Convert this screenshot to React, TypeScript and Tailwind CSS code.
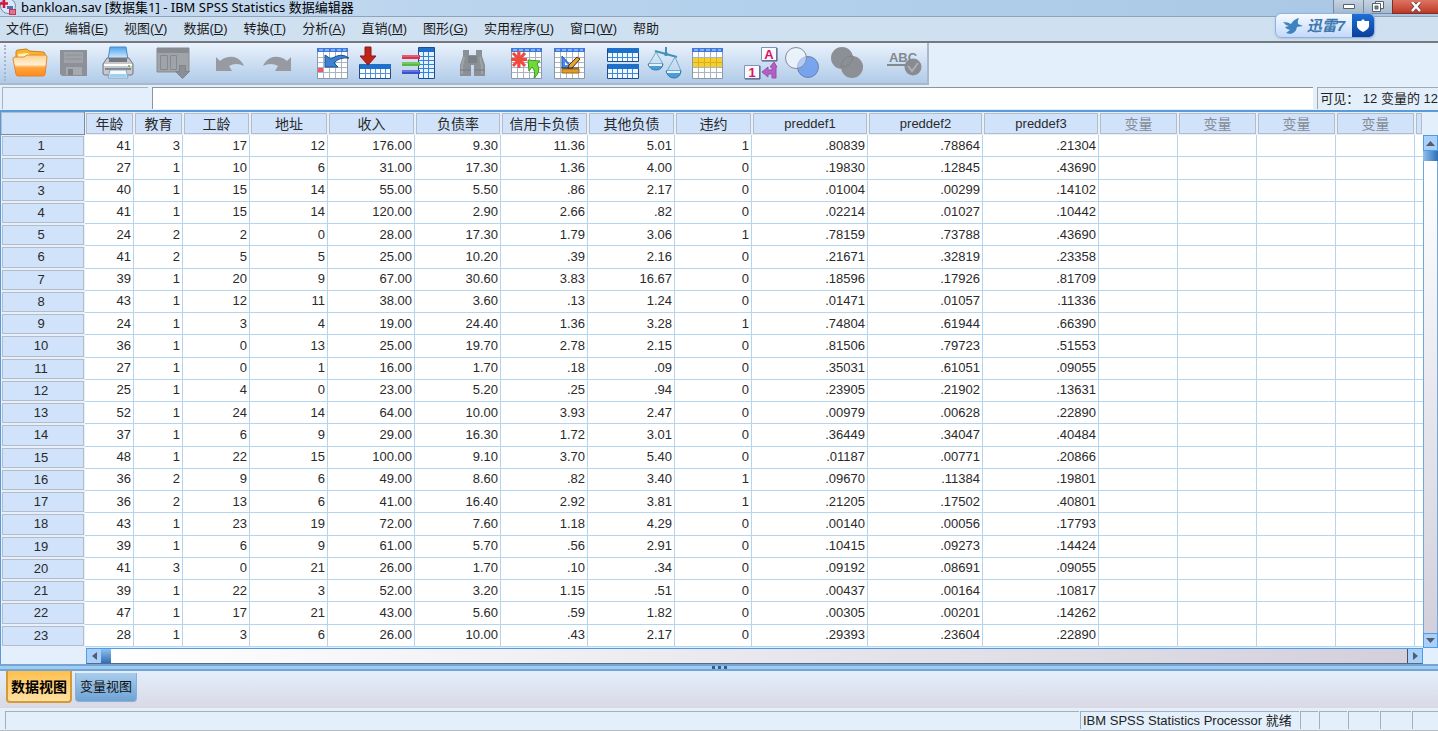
import React from 'react';

interface Column {
  name: string;
  width: string;
  decimals?: number;
}

const columns: Column[] = [
  { name: '年龄', width: 'w-[49px]' },
  { name: '教育', width: 'w-[49px]' },
  { name: '工龄', width: 'w-[67px]' },
  { name: '地址', width: 'w-[78px]' },
  { name: '收入', width: 'w-[87px]', decimals: 2 },
  { name: '负债率', width: 'w-[86px]', decimals: 2 },
  { name: '信用卡负债', width: 'w-[87px]', decimals: 2 },
  { name: '其他负债', width: 'w-[87px]', decimals: 2 },
  { name: '违约', width: 'w-[77px]' },
  { name: 'preddef1', width: 'w-[116px]', decimals: 5 },
  { name: 'preddef2', width: 'w-[115px]', decimals: 5 },
  { name: 'preddef3', width: 'w-[116px]', decimals: 5 }
];

const emptyColumns = [1, 2, 3, 4];

const rows: number[][] = [
  [41, 3, 17, 12, 176, 9.3, 11.36, 5.01, 1, 0.80839, 0.78864, 0.21304],
  [27, 1, 10, 6, 31, 17.3, 1.36, 4, 0, 0.1983, 0.12845, 0.4369],
  [40, 1, 15, 14, 55, 5.5, 0.86, 2.17, 0, 0.01004, 0.00299, 0.14102],
  [41, 1, 15, 14, 120, 2.9, 2.66, 0.82, 0, 0.02214, 0.01027, 0.10442],
  [24, 2, 2, 0, 28, 17.3, 1.79, 3.06, 1, 0.78159, 0.73788, 0.4369],
  [41, 2, 5, 5, 25, 10.2, 0.39, 2.16, 0, 0.21671, 0.32819, 0.23358],
  [39, 1, 20, 9, 67, 30.6, 3.83, 16.67, 0, 0.18596, 0.17926, 0.81709],
  [43, 1, 12, 11, 38, 3.6, 0.13, 1.24, 0, 0.01471, 0.01057, 0.11336],
  [24, 1, 3, 4, 19, 24.4, 1.36, 3.28, 1, 0.74804, 0.61944, 0.6639],
  [36, 1, 0, 13, 25, 19.7, 2.78, 2.15, 0, 0.81506, 0.79723, 0.51553],
  [27, 1, 0, 1, 16, 1.7, 0.18, 0.09, 0, 0.35031, 0.61051, 0.09055],
  [25, 1, 4, 0, 23, 5.2, 0.25, 0.94, 0, 0.23905, 0.21902, 0.13631],
  [52, 1, 24, 14, 64, 10, 3.93, 2.47, 0, 0.00979, 0.00628, 0.2289],
  [37, 1, 6, 9, 29, 16.3, 1.72, 3.01, 0, 0.36449, 0.34047, 0.40484],
  [48, 1, 22, 15, 100, 9.1, 3.7, 5.4, 0, 0.01187, 0.00771, 0.20866],
  [36, 2, 9, 6, 49, 8.6, 0.82, 3.4, 1, 0.0967, 0.11384, 0.19801],
  [36, 2, 13, 6, 41, 16.4, 2.92, 3.81, 1, 0.21205, 0.17502, 0.40801],
  [43, 1, 23, 19, 72, 7.6, 1.18, 4.29, 0, 0.0014, 0.00056, 0.17793],
  [39, 1, 6, 9, 61, 5.7, 0.56, 2.91, 0, 0.10415, 0.09273, 0.14424],
  [41, 3, 0, 21, 26, 1.7, 0.1, 0.34, 0, 0.09192, 0.08691, 0.09055],
  [39, 1, 22, 3, 52, 3.2, 1.15, 0.51, 0, 0.00437, 0.00164, 0.10817],
  [47, 1, 17, 21, 43, 5.6, 0.59, 1.82, 0, 0.00305, 0.00201, 0.14262],
  [28, 1, 3, 6, 26, 10, 0.43, 2.17, 0, 0.29393, 0.23604, 0.2289]
];

const menus: [string, string][] = [
  ['文件', 'F'],
  ['编辑', 'E'],
  ['视图', 'V'],
  ['数据', 'D'],
  ['转换', 'T'],
  ['分析', 'A'],
  ['直销', 'M'],
  ['图形', 'G'],
  ['实用程序', 'U'],
  ['窗口', 'W'],
  ['帮助', '']
];

// SPSS drops the leading zero of fractions
const formatValue = (value: number, decimals?: number) =>
  decimals ? value.toFixed(decimals).replace(/^0\./, '.') : String(value);

interface IconProps {
  children: React.ReactNode;
}

function Icon({ children }: IconProps) {
  return (
    <svg className="w-8 h-8 overflow-visible" viewBox="0 0 32 32" fill="none" aria-hidden="true">
      {children}
    </svg>
  );
}

function OpenIcon() {
  return (
    <Icon>
      <defs>
        <linearGradient id="folderFront" x1="0" y1="0" x2="0" y2="1">
          <stop offset="0" stopColor="#ffd08a" />
          <stop offset=".45" stopColor="#fff0d2" />
          <stop offset=".6" stopColor="#ffa53c" />
          <stop offset="1" stopColor="#ff8a1e" />
        </linearGradient>
      </defs>
      <path d="M2 26V5q0-2 2-2l8-1q2 0 3 2l14 1q2 0 2 2v19z" fill="#f9b52c" stroke="#c9811c" />
      <path d="M4 10V7l10-1 2 2 13 1v4H4z" fill="#fff3c4" />
      <path d="M-1 12q0-2 2-2h9l3-2h18q2 0 2 2l-2 17q0 2-2 2H4q-2 0-2-2z" fill="url(#folderFront)" stroke="#e8842a" />
    </Icon>
  );
}

function SaveIcon() {
  return (
    <Icon>
      <path d="M2 3h27v26H4l-2-2z" fill="#8d9197" />
      <path d="M6 5h19v11H6z" fill="#9fa3a9" />
      <path d="M7 8h17M7 12h17" stroke="#8b9097" />
      <path d="M8 20h16v8H8z" fill="#a5aab0" />
      <path d="M10 22h5v6h-5z" fill="#80858b" />
    </Icon>
  );
}

function PrintIcon() {
  return (
    <Icon>
      <defs>
        <linearGradient id="paper" x1="0" y1="0" x2="0" y2="1">
          <stop offset="0" stopColor="#4da4ee" />
          <stop offset="1" stopColor="#e8f6ff" />
        </linearGradient>
      </defs>
      <path d="M8 0h16l2 13H6z" fill="url(#paper)" stroke="#4a8cc8" />
      <path d="M5 11h22l4 6v9q0 2-2 2H3q-2 0-2-2v-9z" fill="#c6c8cb" stroke="#74777c" />
      <path d="M7 11h18v4H7z" fill="#75797f" />
      <path d="M2 18h28" stroke="#fff" strokeWidth="2" />
      <path d="M3 22h26" stroke="#84888e" strokeWidth="2" />
      <circle cx="27" cy="19" r="1" fill="#53b94e" />
      <path d="M8 23h16l2 8H6z" fill="#f4faff" stroke="#8aa5bd" />
      <path d="M8 27h16l1 3H7z" fill="#9ed2f4" />
    </Icon>
  );
}

function RecallIcon() {
  return (
    <Icon>
      <path d="M-1 1h32v24H-1z" fill="#a0a4a9" stroke="#898d93" />
      <path d="M-1 1h32v5H-1z" fill="#878b91" />
      <path d="M2.500 8.500h7v14h-7zM12.500 8.500h6v14h-6z" fill="#a0a4a9" stroke="#858a90" />
      <path d="M21.500 18.500h6v6h4l-7 7-7-7h4z" fill="#8b8f95" stroke="#7f8389" />
    </Icon>
  );
}

function UndoIcon() {
  return (
    <Icon>
      <path d="M2 10l4 4q6-5 14-4 7 2 10 9-8-4-15 0l3 5H2z" fill="#979ba1" />
    </Icon>
  );
}

function RedoIcon() {
  return (
    <Icon>
      <path d="M29 10l-4 4q-6-5-14-4-7 2-10 9 8-4 15 0l-3 5h16z" fill="#979ba1" />
    </Icon>
  );
}

function GridBase() {
  return (
    <>
      <path d="M1.500 1.500h30v30h-30z" fill="#fff" stroke="#8c97a8" />
      <path d="M1 1h31v4H1z" fill="#3f78dc" />
      <path d="M3 2h4v2H3zM9 2h4v2H9zM15 2h4v2h-4zM21 2h4v2h-4zM27 2h3v2h-3z" fill="#83b0f5" />
      <path d="M7.500 5v26M13.500 5v26M19.500 5v26M25.500 5v26M2 10.500h29M2 15.500h29M2 20.500h29M2 25.500h29" stroke="#aab5c4" />
    </>
  );
}

function GotoCaseIcon() {
  return (
    <Icon>
      <GridBase />
      <path d="M2 21h5v4H2z" fill="#f2566a" />
      <path d="M9 8v12h13l-4-4q5-6 15-5-8-6-18 1z" fill="#3c82d2" stroke="#1c5096" />
    </Icon>
  );
}

function GotoVariableIcon() {
  return (
    <Icon>
      <path d="M.5 17.500h31v14H.5z" fill="#fff" stroke="#1d4c8f" />
      <path d="M1 17h31v5H1z" fill="#1e70c9" />
      <path d="M1 26.500h30M6.500 22v9M11.500 22v9M16.500 22v9M21.500 22v9M26.500 22v9" stroke="#5294d8" />
      <path d="M6 0h6v9h5L9 18 1 9h5z" fill="#bf2419" stroke="#8f1710" />
    </Icon>
  );
}

function VariablesIcon() {
  return (
    <Icon>
      <path d="M16.500.500h16v31h-16z" fill="#e4f2ff" stroke="#1d4c8f" />
      <path d="M17 1h15v4H17z" fill="#1e70c9" />
      <path d="M21.500 5v26M26.500 5v26M17 9.500h15M17 13.500h15M17 17.500h15M17 21.500h15M17 25.500h15" stroke="#3483d6" />
      <path d="M0 8h18v4H0z" fill="#dc3252" />
      <path d="M0 15h18v4H0z" fill="#58b93c" />
      <path d="M0 23h18v4H0z" fill="#3e4fd0" />
      <path d="M0 9h17M0 16h17M0 24h17" stroke="#fff" strokeOpacity=".4" />
    </Icon>
  );
}

function FindIcon() {
  return (
    <Icon>
      <path d="M7 3h6v5h7V3h6v6l3 9v11H18V18h-3v11H4V18l3-9z" fill="#8b9096" />
      <path d="M12 9h9v7h-9z" fill="#7c8187" />
      <path d="M8 10l-2 9v8M24 10l2 9v8" stroke="#a0a4a9" strokeWidth="2" />
      <path d="M4 23h11M18 23h11" stroke="#757a80" />
    </Icon>
  );
}

function InsertCaseIcon() {
  return (
    <Icon>
      <GridBase />
      <path d="M9 4v17M1 12.500h16M3 6l12 13M15 6L3 19" stroke="#f04a3c" strokeWidth="3" />
      <path d="M18 13l12 1-3 3q5 7-3 14 2-7-2-11l-3 4z" fill="#6fd83a" stroke="#389b1c" />
    </Icon>
  );
}

function InsertVariableIcon() {
  return (
    <Icon>
      <GridBase />
      <path d="M9 9v12h11z" fill="#4f89e6" stroke="#205ab8" />
      <path d="M12 15v3h3z" fill="#fff" />
      <path d="M24 10l3 2-8 9-4 1 1-4z" fill="#eaa233" stroke="#453319" />
      <path d="M9 22h17v4H9z" fill="#e39b27" stroke="#a3680c" />
      <path d="M8 21h18" stroke="#35322e" />
    </Icon>
  );
}

function SplitIcon() {
  return (
    <Icon>
      <path d="M.5 1.500h31v13H.5zM.5 17.500h31v14H.5z" fill="#f0f8ff" stroke="#1d4c8f" />
      <path d="M1 1h31v5H1zM1 17h31v5H1z" fill="#1e70c9" />
      <path d="M1 10.500h30M1 26.500h30M5.500 6v8M10.500 6v8M15.500 6v8M20.500 6v8M25.500 6v8M5.500 22v9M10.500 22v9M15.500 22v9M20.500 22v9M25.500 22v9" stroke="#3e8ad8" />
    </Icon>
  );
}

function WeightIcon() {
  return (
    <Icon>
      <path d="M6 4l22 6M17 0v9" stroke="#4792b4" strokeWidth="2" />
      <circle cx="17" cy="7" r="2" fill="#4792b4" />
      <path d="M7 5L0 17M7 5l7 12M26 10l-8 14M26 10l6 14" stroke="#6bacc8" />
      <path d="M-1 17h15q-1 6-7 6t-8-6zM17 24h15q-1 7-7 7t-8-7z" fill="#4a9dd8" stroke="#337aa8" />
      <path d="M0 18h13M18 25h13" stroke="#dff4ff" strokeWidth="2" />
    </Icon>
  );
}

function SelectIcon() {
  return (
    <Icon>
      <GridBase />
      <path d="M2 11h29v9H2z" fill="#f5cf2f" />
      <path d="M7.500 11v9M13.500 11v9M19.500 11v9M25.500 11v9M2 15.500h29" stroke="#d9ae20" />
    </Icon>
  );
}

function LabelsIcon() {
  return (
    <Icon>
      <path d="M16.500.500h15v13h-15zM-.5 18.500h15v13h-15z" fill="#f8faff" stroke="#8293b5" />
      <path d="M17 14h15V1M0 32h15V19" stroke="#47577e" />
      <text x="24" y="12" textAnchor="middle" fill="#e0105a" className="text-[13px] font-bold">A</text>
      <text x="7" y="30" textAnchor="middle" fill="#e0105a" className="text-[13px] font-bold">1</text>
      <path d="M25 20l4-5 3 5h-1v11h-4v-4h-4v3l-6-5 6-5v3h4v-3z" fill="#b45fc2" stroke="#9a4fab" />
    </Icon>
  );
}

function SetsIcon() {
  return (
    <Icon>
      <circle cx="9" cy="11" r="10.500" fill="#f2f6fd" fillOpacity=".8" />
      <circle cx="21" cy="20" r="10.500" fill="#6496ee" fillOpacity=".8" stroke="#6c82ab" />
      <circle cx="9" cy="11" r="10.500" fill="#e6effc" fillOpacity=".5" stroke="#858c98" />
    </Icon>
  );
}

function AllVariablesIcon() {
  return (
    <Icon>
      <circle cx="13" cy="11" r="11" fill="#8c8f94" />
      <circle cx="23" cy="20" r="11" fill="#8c8f94" />
      <path d="M12 20a11 11 0 0 1 12-11 11 11 0 0 1-12 11z" stroke="#7f8388" />
    </Icon>
  );
}

function SpellIcon() {
  return (
    <Icon>
      <text x="14" y="15" textAnchor="middle" fill="#84898f" className="text-[13px] font-bold">ABC</text>
      <path d="M-2 18h18" stroke="#84898f" strokeWidth="2" />
      <circle cx="24" cy="20" r="8.500" fill="#888c91" />
      <path d="M19 19l4 5 6-8" stroke="#abafb5" strokeWidth="2" />
    </Icon>
  );
}

interface Tool {
  label: string;
  icon: React.ElementType;
}

interface ToolGroup {
  className: string;
  tools: Tool[];
}

const toolGroups: ToolGroup[] = [
  {
    className: 'gap-3',
    tools: [
      { label: '打开', icon: OpenIcon },
      { label: '保存', icon: SaveIcon },
      { label: '打印', icon: PrintIcon }
    ]
  },
  { className: 'ml-6', tools: [{ label: '重新调用对话框', icon: RecallIcon }] },
  {
    className: 'ml-6 gap-4',
    tools: [
      { label: '撤消', icon: UndoIcon },
      { label: '重做', icon: RedoIcon }
    ]
  },
  {
    className: 'ml-[22px] gap-[11px]',
    tools: [
      { label: '转到个案', icon: GotoCaseIcon },
      { label: '转到变量', icon: GotoVariableIcon },
      { label: '变量', icon: VariablesIcon }
    ]
  },
  { className: 'ml-[22px]', tools: [{ label: '查找', icon: FindIcon }] },
  {
    className: 'ml-[22px] gap-[11px]',
    tools: [
      { label: '插入个案', icon: InsertCaseIcon },
      { label: '插入变量', icon: InsertVariableIcon }
    ]
  },
  {
    className: 'ml-[22px] gap-[10px]',
    tools: [
      { label: '拆分文件', icon: SplitIcon },
      { label: '加权个案', icon: WeightIcon },
      { label: '选择个案', icon: SelectIcon }
    ]
  },
  {
    className: 'ml-[22px] gap-[10px]',
    tools: [
      { label: '值标签', icon: LabelsIcon },
      { label: '使用变量集', icon: SetsIcon },
      { label: '显示所有变量', icon: AllVariablesIcon }
    ]
  },
  { className: 'ml-7', tools: [{ label: '拼写检查', icon: SpellIcon }] }
];

function TitleBar() {
  return (
    <header className="flex h-4 shrink-0 items-center overflow-hidden bg-linear-to-r from-[#c9dcf0] via-[#b3d0ec] to-[#a9c6e4]">
      <svg className="h-4 w-4 shrink-0" viewBox="0 0 16 16" aria-hidden="true">
        <circle cx="8" cy="6" r="7.500" fill="#dce8f6" stroke="#6f8fb8" />
        <path d="M4 0v8M0 3.500h8" stroke="#d8143c" strokeWidth="2.500" />
        <path d="M7 6h6v3H7z" fill="#4a76b8" />
        <path d="M9 9h7v6H9z" fill="#c93454" />
        <path d="M10 11h5M10 13h5" stroke="#f2b6c4" />
      </svg>
      <h1 className="mb-[2px] ml-[5px] whitespace-nowrap font-['Noto_Sans','Noto_Sans_CJK_SC',sans-serif] text-[13px] leading-4 text-black">
        bankloan.sav [数据集1] - IBM SPSS Statistics 数据编辑器
      </h1>
      <div className="ml-auto flex h-[14px] self-start text-white">
        <button aria-label="最小化" className="flex w-[30px] items-center justify-center border-b border-l border-[#75889e] bg-linear-to-b from-[#c5d3e2] to-[#a6b9cd]">
          <svg className="h-[5px] w-3" viewBox="0 0 12 5"><path d="M.5.500h11v4H.5z" fill="#fff" stroke="#56606c" /></svg>
        </button>
        <button aria-label="还原" className="flex w-[29px] items-center justify-center border-b border-l border-[#75889e] bg-linear-to-b from-[#c5d3e2] to-[#a6b9cd]">
          <svg className="h-[11px] w-3" viewBox="0 0 12 11">
            <path d="M3.500.500h8v7h-8z" fill="#fff" stroke="#56606c" />
            <path d="M.5 2.500h8v8h-8z" fill="#fff" stroke="#56606c" />
            <path d="M3 5h3v3H3z" fill="#7a8796" stroke="#56606c" />
          </svg>
        </button>
        <button aria-label="关闭" className="flex w-[46px] items-center justify-center border-b border-l border-[#7b3028] bg-linear-to-b from-[#dd7563] to-[#bd3722]">
          <svg className="h-[10px] w-3" viewBox="0 0 12 10">
            <path d="M2 0l8 9M10 0L2 9" stroke="#69404a" strokeWidth="4" />
            <path d="M2 0l8 9M10 0L2 9" stroke="#fff" strokeWidth="2.500" />
          </svg>
        </button>
      </div>
    </header>
  );
}

function ThunderWidget() {
  return (
    <div className="absolute right-[63px] top-[13px] flex h-[25px] w-[100px] overflow-hidden rounded-md border border-[#8fb2df] bg-linear-to-b from-[#f5faff] to-[#c4dafa] shadow">
      <div className="flex flex-1 items-center justify-center gap-1">
        <svg className="h-4 w-5" viewBox="0 0 20 16" aria-hidden="true">
          <path d="M0 4q5 0 8 2 3-5 8-6-2 3-1 6l5 2-6 1q-1 6-7 7l-4-1 4-3q-4-1-5-3l4-1Q2 7 0 4z" fill="#3e82c0" />
        </svg>
        <span className="text-[15px] leading-5 font-bold italic text-[#3d78ae]">迅雷7</span>
      </div>
      <button aria-label="迅雷" className="flex w-[22px] items-center justify-center bg-linear-to-b from-[#1d6fd6] to-[#0d3f9c]">
        <svg className="h-[14px] w-3" viewBox="0 0 12 14">
          <path d="M6 0l2 2h4v5q0 3-6 6-6-3-6-6V2h4z" fill="#fff" />
        </svg>
      </button>
    </div>
  );
}

function MenuBar() {
  return (
    <nav className="flex h-[27px] shrink-0 items-center gap-4 border-t border-b-2 border-t-[#8fa3ba] border-b-[#75797f] bg-[#cfe0f1] px-[6px]">
      {menus.map(([name, key]) => (
        <button key={name} className="whitespace-nowrap text-[13px] leading-5 text-[#1c1c1c]">
          {name}
          {key && (
            <>
              (<span className="underline">{key}</span>)
            </>
          )}
        </button>
      ))}
    </nav>
  );
}

function Toolbar() {
  return (
    <div className="flex h-[42px] shrink-0 bg-[#e3effb]">
      <div className="flex items-center border-r-2 border-b-2 border-[#a9b9ca] bg-linear-to-b from-[#eaf2fc] to-[#b0cbe8] pr-[6px]">
        <div className="ml-1 mr-2 h-9 border-l-2 border-dotted border-[#a4b6ca]" />
        {toolGroups.map((group) => (
          <div key={group.tools[0].label} className={`flex ${group.className}`}>
            {group.tools.map((tool) => (
              <button key={tool.label} aria-label={tool.label} className="h-8 w-8">
                <tool.icon />
              </button>
            ))}
          </div>
        ))}
      </div>
    </div>
  );
}

function CellEditor() {
  return (
    <div className="flex h-[25px] shrink-0 gap-1 bg-[#e3effb] pt-[2px] pl-[2px]">
      <input
        aria-label="单元格"
        readOnly
        className="h-[22px] w-[146px] border-t border-l border-[#a9b2bd] bg-[#e3effb]"
      />
      <input
        aria-label="单元格值"
        className="h-[22px] min-w-0 flex-1 border-t border-l border-[#8d949c] bg-white px-1 text-[13px] outline-none"
      />
      <div className="h-[22px] shrink-0 border-t border-l border-[#a0a8b2] pl-[2px] text-[13px] leading-[22px] whitespace-nowrap text-[#222]">
        可见： 12 变量的 12
      </div>
    </div>
  );
}

const headCell =
  'bg-[#d0e3fb] p-0 font-normal shadow-[inset_0_0_0_1px_#e6effa,inset_0_0_0_2px_#b3bdca]';
const bodyCell = 'border-r border-b border-[#b5d4ee] py-0 pr-[2px] pl-0';

function DataGrid() {
  return (
    <table className="h-full w-full table-fixed border-separate border-spacing-0 bg-white text-[13px] leading-4 text-[#2a2a2a]">
      <colgroup>
        <col className="w-[84px]" />
        {columns.map((column) => (
          <col key={column.name} className={column.width} />
        ))}
        {emptyColumns.map((id) => (
          <col key={id} className="w-[79px]" />
        ))}
        <col />
      </colgroup>
      <thead>
        <tr className="h-[23px] text-[14px]">
          <th aria-label="个案" className="border-r border-b border-[#7f8b9b] bg-[#d0e3fb] shadow-[inset_1px_1px_0_#b3bdca]" />
          {columns.map((column) => (
            <th
              key={column.name}
              scope="col"
              className={`${headCell} ${column.name.startsWith('pred') ? 'text-[13px]' : ''}`}
            >
              {column.name}
            </th>
          ))}
          {emptyColumns.map((id) => (
            <th key={id} scope="col" className={`${headCell} text-[#858b93]`}>
              变量
            </th>
          ))}
          <th aria-label="更多" className={headCell} />
        </tr>
      </thead>
      <tbody>
        {rows.map((row, index) => (
          <tr key={index}>
            <th scope="row" className={`${headCell} pr-1`}>
              {index + 1}
            </th>
            {row.map((value, idx) => (
              <td key={idx} className={`${bodyCell} text-right`}>
                {formatValue(value, columns[idx].decimals)}
              </td>
            ))}
            {emptyColumns.map((id) => (
              <td key={id} className={bodyCell} />
            ))}
            <td className="border-b border-[#b5d4ee] p-0" />
          </tr>
        ))}
      </tbody>
    </table>
  );
}

function VerticalScrollbar() {
  return (
    <div className="flex w-[15px] shrink-0 flex-col bg-[#e3effb] pt-[23px]">
      <button aria-label="向上滚动" className="flex h-4 items-center justify-center border border-[#4f9be4] bg-[#a9d0fb]">
        <svg className="h-[5px] w-[9px]" viewBox="0 0 9 5"><path d="M0 5l4.500-5L9 5z" fill="#555c66" /></svg>
      </button>
      <div className="h-[10px] bg-linear-to-r from-[#8fc0ee] to-[#2f6fb6]" />
      <div className="flex-1 border-x border-[#6ea8de] bg-linear-to-b from-white to-[#d3d0dc]" />
      <button aria-label="向下滚动" className="flex h-[15px] items-center justify-center border border-[#4f9be4] bg-[#a9d0fb]">
        <svg className="h-[5px] w-[9px]" viewBox="0 0 9 5"><path d="M0 0l4.500 5L9 0z" fill="#555c66" /></svg>
      </button>
    </div>
  );
}

function HorizontalScrollbar() {
  return (
    <div className="flex h-4 shrink-0 bg-[#e3effb] pr-[15px] pl-[85px]">
      <div className="flex flex-1 border border-[#4f9be4] border-b-[#5a6b80]">
        <button aria-label="向左滚动" className="flex w-[14px] items-center justify-center bg-[#a9d0fb]">
          <svg className="h-2 w-[5px]" viewBox="0 0 5 8"><path d="M5 0v8L0 4z" fill="#555c66" /></svg>
        </button>
        <div className="w-[10px] bg-linear-to-b from-[#8fc0ee] to-[#2f6fb6]" />
        <div className="flex-1 border-r border-[#4a4f58] bg-linear-to-r from-white to-[#d3d0dc]" />
        <button aria-label="向右滚动" className="flex w-[14px] items-center justify-center bg-[#a9d0fb]">
          <svg className="h-2 w-[5px]" viewBox="0 0 5 8"><path d="M0 0v8l5-4z" fill="#555c66" /></svg>
        </button>
      </div>
    </div>
  );
}

function ViewTabs() {
  return (
    <div className="flex h-[37px] shrink-0 items-start gap-[3px] bg-linear-to-b from-[#e3effb] to-[#dad8e5] pl-[6px]">
      <button className="h-8 w-[66px] rounded-b border-2 border-t-0 border-[#d39a35] bg-linear-to-b from-[#fdc04a] to-[#ffe0a0] pt-[2px] text-[14px] leading-5 font-bold whitespace-nowrap text-black">
        数据视图
      </button>
      <button className="mt-[2px] h-[29px] w-[62px] rounded-b border border-t-0 border-[#86b2da] bg-linear-to-b from-[#a8cdec] to-[#6fa3d4] text-[13px] leading-5 whitespace-nowrap text-[#111]">
        变量视图
      </button>
    </div>
  );
}

function StatusBar() {
  const box = 'h-[18px] border-t border-l border-[#a6aeb8]';
  return (
    <footer className="flex h-[23px] shrink-0 gap-px border-b border-[#b4bcc6] bg-[#e3effb] pt-[3px] pl-[5px]">
      <div className={`${box} flex-1`} />
      <div className={`${box} w-[219px] pl-[2px] text-[13px] leading-[18px] whitespace-nowrap text-[#222]`}>
        IBM SPSS Statistics Processor 就绪
      </div>
      <div className={`${box} w-[18px]`} />
      <div className={`${box} w-7`} />
      <div className={`${box} w-[31px]`} />
      <div className={`${box} w-[31px]`} />
      <div className={`${box} w-[26px]`} />
    </footer>
  );
}

export default function App() {
  return (
    <div className="relative flex h-screen flex-col overflow-hidden bg-[#e3effb] font-['Liberation_Sans','Noto_Sans_CJK_SC',sans-serif]">
      <TitleBar />
      <MenuBar />
      <Toolbar />
      <CellEditor />
      <main className="flex min-h-0 flex-1 flex-col border-t-2 border-l border-[#5b9ad8]">
        <div className="flex min-h-0 flex-1">
          <div className="min-w-0 flex-1 pb-px">
            <DataGrid />
          </div>
          <VerticalScrollbar />
        </div>
        <HorizontalScrollbar />
      </main>
      <div className="flex h-[7px] shrink-0 items-center justify-center gap-[3px] border-y-2 border-[#76a5d3] bg-[#9dcdf5]">
        <span className="h-[3px] w-[3px] bg-[#305f96]" />
        <span className="h-[3px] w-[3px] bg-[#305f96]" />
        <span className="h-[3px] w-[3px] bg-[#305f96]" />
      </div>
      <ViewTabs />
      <StatusBar />
      <ThunderWidget />
    </div>
  );
}
